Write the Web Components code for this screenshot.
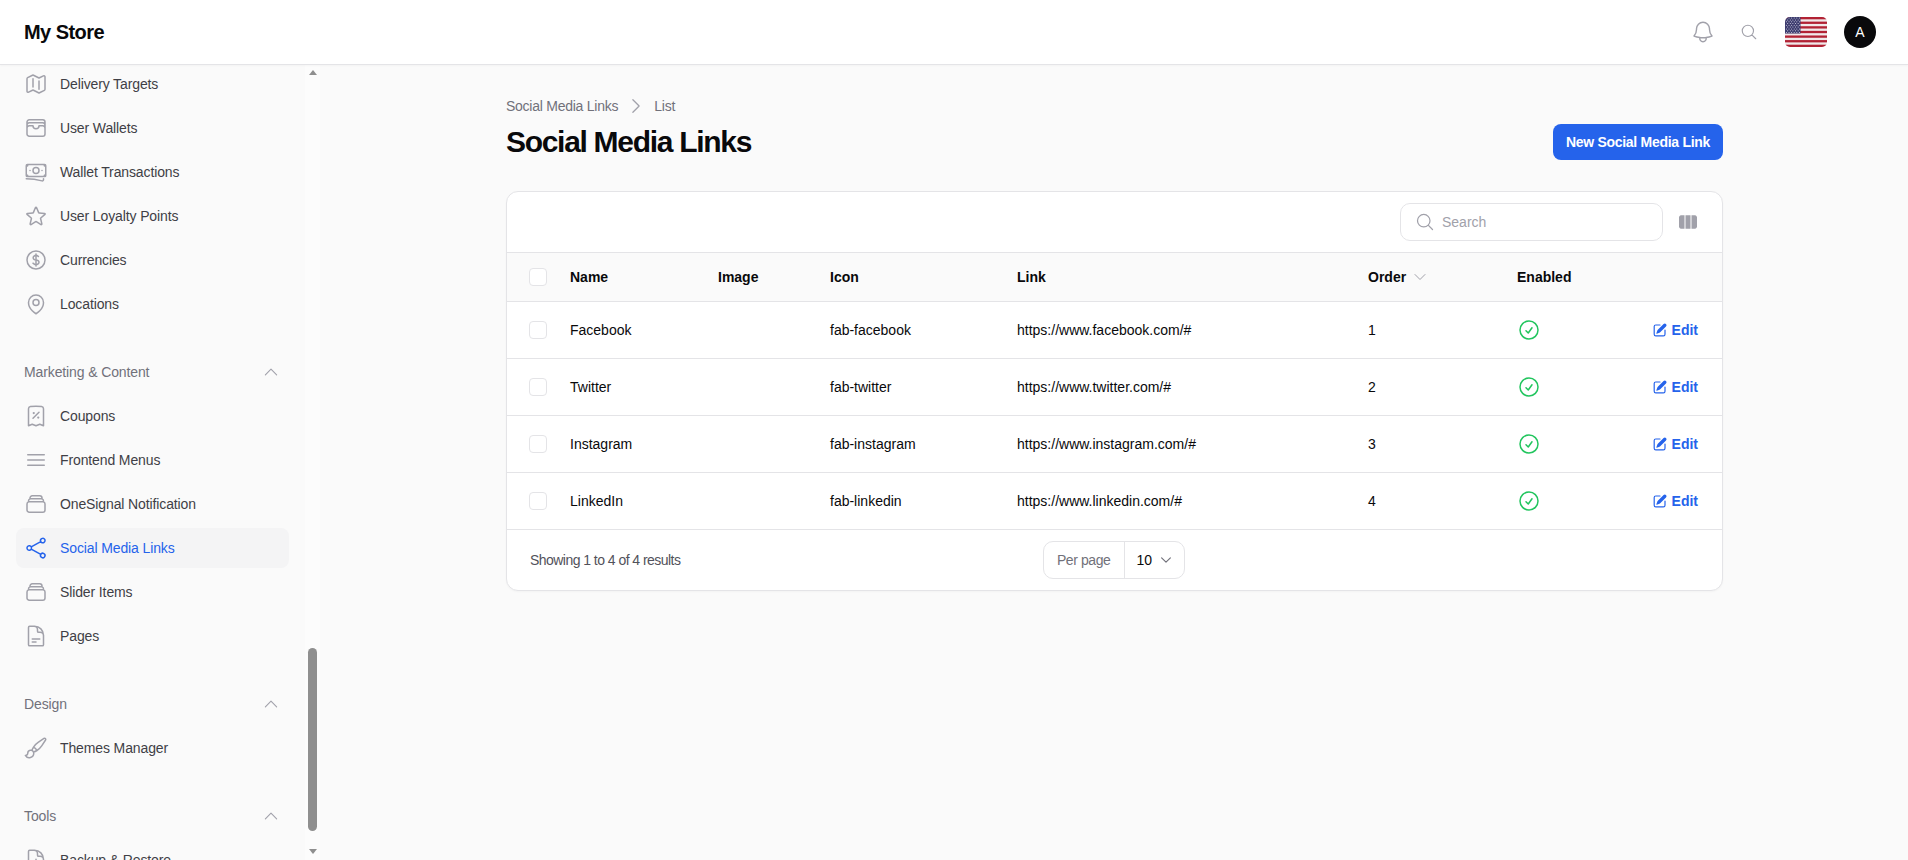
<!DOCTYPE html>
<html lang="en"><head><meta charset="utf-8"><title>Social Media Links</title>
<style>
html,body{margin:0;height:100%;overflow:hidden;background:#fafafa}
body{font-family:"Liberation Sans",Arial,sans-serif;font-size:14px;color:#09090b}
</style></head><body>
<app-shell>
  <top-bar slot="top" brand="My Store"></top-bar>
  <side-bar slot="side">
    <nav-item icon="map">Delivery Targets</nav-item>
    <nav-item icon="wallet">User Wallets</nav-item>
    <nav-item icon="banknotes">Wallet Transactions</nav-item>
    <nav-item icon="star">User Loyalty Points</nav-item>
    <nav-item icon="dollar">Currencies</nav-item>
    <nav-item icon="pin">Locations</nav-item>
    <nav-group label="Marketing &amp; Content">
      <nav-item icon="receipt">Coupons</nav-item>
      <nav-item icon="bars">Frontend Menus</nav-item>
      <nav-item icon="stack">OneSignal Notification</nav-item>
      <nav-item icon="share" active>Social Media Links</nav-item>
      <nav-item icon="stack">Slider Items</nav-item>
      <nav-item icon="doc">Pages</nav-item>
    </nav-group>
    <nav-group label="Design">
      <nav-item icon="brush">Themes Manager</nav-item>
    </nav-group>
    <nav-group label="Tools">
      <nav-item icon="docdown">Backup &amp; Restore</nav-item>
    </nav-group>
  </side-bar>
  <list-page slot="main" crumb="Social Media Links" leaf="List" heading="Social Media Links" action="New Social Media Link">
    <data-card>
      <table-row head>
        <check-box></check-box><span>Name</span><span>Image</span><span>Icon</span><span>Link</span><sort-head>Order</sort-head><span>Enabled</span><span></span>
      </table-row>
      <table-row><check-box></check-box><span>Facebook</span><span></span><span>fab-facebook</span><span>https://www.facebook.com/#</span><span>1</span><ok-mark></ok-mark><edit-link></edit-link></table-row>
      <table-row><check-box></check-box><span>Twitter</span><span></span><span>fab-twitter</span><span>https://www.twitter.com/#</span><span>2</span><ok-mark></ok-mark><edit-link></edit-link></table-row>
      <table-row><check-box></check-box><span>Instagram</span><span></span><span>fab-instagram</span><span>https://www.instagram.com/#</span><span>3</span><ok-mark></ok-mark><edit-link></edit-link></table-row>
      <table-row><check-box></check-box><span>LinkedIn</span><span></span><span>fab-linkedin</span><span>https://www.linkedin.com/#</span><span>4</span><ok-mark></ok-mark><edit-link></edit-link></table-row>
    </data-card>
  </list-page>
</app-shell>
<script>
const P={
map:'M9 6.75V15m6-6v8.25m.503 3.498 4.875-2.437c.381-.19.622-.58.622-1.006V4.82c0-.836-.88-1.38-1.628-1.006l-3.869 1.934c-.317.159-.69.159-1.006 0L9.503 3.252a1.125 1.125 0 0 0-1.006 0L3.622 5.689C3.24 5.88 3 6.27 3 6.695V19.18c0 .836.88 1.38 1.628 1.006l3.869-1.934c.317-.159.69-.159 1.006 0l4.994 2.497c.317.158.69.158 1.006 0Z',
wallet:'M21 12a2.25 2.25 0 0 0-2.25-2.25H15a3 3 0 1 1-6 0H5.25A2.25 2.25 0 0 0 3 12m18 0v6a2.25 2.25 0 0 1-2.25 2.25H5.25A2.25 2.25 0 0 1 3 18v-6m18 0V9M3 12V9m18 0a2.25 2.25 0 0 0-2.25-2.25H5.25A2.25 2.25 0 0 0 3 9m18 0V6a2.25 2.25 0 0 0-2.25-2.25H5.25A2.25 2.25 0 0 0 3 6v3',
banknotes:'M2.25 18.75a60.07 60.07 0 0 1 15.797 2.101c.727.198 1.453-.342 1.453-1.096V18.75M3.75 4.5v.75A.75.75 0 0 1 3 6h-.75m0 0v-.375c0-.621.504-1.125 1.125-1.125H20.25M2.25 6v9m18-10.5v.75c0 .414.336.75.75.75h.75m-1.5-1.5h.375c.621 0 1.125.504 1.125 1.125v9.75c0 .621-.504 1.125-1.125 1.125h-.375m1.5-1.5H21a.75.75 0 0 0-.75.75v.75m0 0H3.75m0 0h-.375a1.125 1.125 0 0 1-1.125-1.125V15m1.5 1.5v-.75A.75.75 0 0 0 3 15h-.75M15 10.5a3 3 0 1 1-6 0 3 3 0 0 1 6 0Zm3 0h.008v.008H18V10.5Zm-12 0h.008v.008H6V10.5Z',
star:'M11.48 3.499a.562.562 0 0 1 1.04 0l2.125 5.111a.563.563 0 0 0 .475.345l5.518.442c.499.04.701.663.321.988l-4.204 3.602a.563.563 0 0 0-.182.557l1.285 5.385a.562.562 0 0 1-.84.61l-4.725-2.885a.562.562 0 0 0-.586 0L6.982 20.54a.562.562 0 0 1-.84-.61l1.285-5.386a.562.562 0 0 0-.182-.557l-4.204-3.602a.562.562 0 0 1 .321-.988l5.518-.442a.563.563 0 0 0 .475-.345L11.48 3.5Z',
dollar:'M12 6v12m-3-2.818.879.659c1.171.879 3.07.879 4.242 0 1.172-.879 1.172-2.303 0-3.182C13.536 12.219 12.768 12 12 12c-.725 0-1.45-.22-2.003-.659-1.106-.879-1.106-2.303 0-3.182s2.9-.879 4.006 0l.415.33M21 12a9 9 0 1 1-18 0 9 9 0 0 1 18 0Z',
pin:'M15 10.5a3 3 0 1 1-6 0 3 3 0 0 1 6 0Z M19.5 10.5c0 7.142-7.5 11.25-7.5 11.25S4.5 17.642 4.5 10.5a7.5 7.5 0 1 1 15 0Z',
receipt:'m9 14.25 6-6m4.5-3.493V21.75l-3.75-1.5-3.75 1.5-3.75-1.5-3.75 1.5V4.757c0-1.108.806-2.057 1.907-2.185a48.507 48.507 0 0 1 11.186 0c1.1.128 1.907 1.077 1.907 2.185ZM9.75 9h.008v.008H9.75V9Zm.375 0a.375.375 0 1 1-.75 0 .375.375 0 0 1 .75 0Zm4.125 4.5h.008v.008h-.008V13.5Zm.375 0a.375.375 0 1 1-.75 0 .375.375 0 0 1 .75 0Z',
bars:'M3.75 6.75h16.5M3.75 12h16.5m-16.5 5.25h16.5',
stack:'M6 6.878V6a2.25 2.25 0 0 1 2.25-2.25h7.5A2.25 2.25 0 0 1 18 6v.878m-12 0c.235-.083.487-.128.75-.128h10.5c.263 0 .515.045.75.128m-12 0A2.25 2.25 0 0 0 4.5 9v.878m13.5-3A2.25 2.25 0 0 1 19.5 9v.878m0 0a2.246 2.246 0 0 0-.75-.128H5.25c-.263 0-.515.045-.75.128m15 0A2.25 2.25 0 0 1 21 12v6a2.25 2.25 0 0 1-2.25 2.25H5.25A2.25 2.25 0 0 1 3 18v-6c0-.98.626-1.813 1.5-2.122',
share:'M7.217 10.907a2.25 2.25 0 1 0 0 2.186m0-2.186c.18.324.283.696.283 1.093s-.103.77-.283 1.093m0-2.186 9.566-5.314m-9.566 7.5 9.566 5.314m0 0a2.25 2.25 0 1 0 3.935 2.186 2.25 2.25 0 0 0-3.935-2.186Zm0-12.814a2.25 2.25 0 1 0 3.933-2.185 2.25 2.25 0 0 0-3.933 2.185Z',
doc:'M19.5 14.25v-2.625a3.375 3.375 0 0 0-3.375-3.375h-1.5A1.125 1.125 0 0 1 13.5 7.125v-1.5a3.375 3.375 0 0 0-3.375-3.375H8.25m0 12.75h7.5m-7.5 3H12M10.5 2.25H5.625c-.621 0-1.125.504-1.125 1.125v17.25c0 .621.504 1.125 1.125 1.125h12.75c.621 0 1.125-.504 1.125-1.125V11.25a9 9 0 0 0-9-9Z',
docdown:'M19.5 14.25v-2.625a3.375 3.375 0 0 0-3.375-3.375h-1.5A1.125 1.125 0 0 1 13.5 7.125v-1.5a3.375 3.375 0 0 0-3.375-3.375H8.25m.75 12 3 3m0 0 3-3m-3 3v-6m-1.5-9H5.625c-.621 0-1.125.504-1.125 1.125v17.25c0 .621.504 1.125 1.125 1.125h12.75c.621 0 1.125-.504 1.125-1.125V11.25a9 9 0 0 0-9-9Z',
brush:'M9.53 16.122a3 3 0 0 0-5.78 1.128 2.25 2.25 0 0 1-2.4 2.245 4.5 4.5 0 0 0 8.4-2.245c0-.399-.078-.78-.22-1.128Zm0 0a15.998 15.998 0 0 0 3.388-1.62m-5.043-.025a15.994 15.994 0 0 1 1.622-3.395m3.42 3.42a15.995 15.995 0 0 0 4.764-4.648l3.876-5.814a1.151 1.151 0 0 0-1.597-1.597L14.146 6.32a15.996 15.996 0 0 0-4.649 4.763m3.42 3.42a6.776 6.776 0 0 0-3.42-3.42',
bell:'M14.857 17.082a23.848 23.848 0 0 0 5.454-1.31A8.967 8.967 0 0 1 18 9.75V9A6 6 0 0 0 6 9v.75a8.967 8.967 0 0 1-2.312 6.022c1.733.64 3.56 1.085 5.455 1.31m5.714 0a24.255 24.255 0 0 1-5.714 0m5.714 0a3 3 0 1 1-5.714 0',
search:'m21 21-5.197-5.197m0 0A7.5 7.5 0 1 0 5.196 5.196a7.5 7.5 0 0 0 10.607 10.607Z',
check:'M9 12.75 11.25 15 15 9.75M21 12a9 9 0 1 1-18 0 9 9 0 0 1 18 0Z',
up:'m4.5 15.75 7.5-7.5 7.5 7.5',
down:'m19.5 8.25-7.5 7.5-7.5-7.5',
right:'m8.25 4.5 7.5 7.5-7.5 7.5'};
const svg=(n,s,c,w=1.5)=>`<svg xmlns="http://www.w3.org/2000/svg" width="${s}" height="${s}" viewBox="0 0 24 24" fill="none" stroke="${c}" stroke-width="${w}" stroke-linecap="round" stroke-linejoin="round" style="display:block;flex:none"><path d="${P[n]}"/></svg>`;
const stripes=Array.from({length:7},(_,i)=>`<rect y="${i*2*30/13}" width="42" height="${30/13}" fill="#b22234"/>`).join('');
let stars='';for(let r=0;r<9;r++)for(let c=0;c<(r%2?5:6);c++)stars+=`<circle cx="${(r%2?2.7:1.4)+c*2.6}" cy="${1.1+r*1.8}" r=".5" fill="#e3e4f0"/>`;
class Base extends HTMLElement{
  html(h){this.attachShadow({mode:'open'}).innerHTML=h}
}
customElements.define('app-shell',class extends Base{constructor(){super();this.html(`<style>
:host{display:grid;grid-template-columns:320px 1fr;grid-template-rows:65px 795px;height:860px}
.t{grid-column:1/3;display:block}
</style><slot class="t" name="top"></slot><slot name="side"></slot><slot name="main"></slot>`)}});
customElements.define('top-bar',class extends Base{constructor(){super()}
connectedCallback(){if(this.shadowRoot)return;this.html(`<style>
:host{display:flex;align-items:center;height:64px;background:#fff;border-bottom:1px solid #e4e4e7;box-shadow:0 1px 2px rgba(0,0,0,.03);padding:0 32px 0 24px;position:relative;z-index:2}
b{font-size:20px;font-weight:700;letter-spacing:-.55px;color:#09090b;flex:1;line-height:28px}
.bell{margin-right:24px}.s{margin-right:27px}
.flag{width:42px;height:30px;border-radius:5px;overflow:hidden;margin-right:17px;display:block}
.av{width:32px;height:32px;border-radius:50%;background:#09090b;color:#fff;display:flex;align-items:center;justify-content:center;font-size:14px}
</style><b>${this.getAttribute('brand')}</b>
<span class="bell">${svg('bell',26,'#a1a1aa',1.3)}</span><span class="s">${svg('search',18,'#a1a1aa')}</span>
<svg class="flag" viewBox="0 0 42 30"><rect width="42" height="30" fill="#f1e9ea"/>${stripes}<rect width="15.500" height="16.500" fill="#3c3b6e"/>${stars}</svg>
<span class="av">A</span>`)}});
customElements.define('side-bar',class extends Base{constructor(){super();this.html(`<style>
:host{display:flex;height:795px;min-height:0;background:#fafafa}
.sc{width:305px;height:795px;overflow:hidden;box-sizing:border-box}
.sp{height:2479px}
.in{padding:0 16px 46px;display:flex;flex-direction:column;gap:4px;letter-spacing:-.12px}
.rail{width:15px;height:795px;background:#fcfcfc;display:flex;flex-direction:column;align-items:center;box-sizing:border-box;padding:5px 0 6px}
.ar{width:0;height:0;border-left:4.500px solid transparent;border-right:4.500px solid transparent}
.ar.u{border-bottom:5px solid #8f8f8f}.ar.d{border-top:5px solid #8f8f8f}
.gap{flex:1}
.th{width:9px;height:183px;border-radius:5px;background:#8f8f8f;margin-bottom:18px}
</style><div class="sc"><div class="sp"></div><div class="in"><slot></slot></div></div>
<div class="rail"><div class="ar u"></div><div class="gap"></div><div class="th"></div><div class="ar d"></div></div>`)}});
customElements.define('nav-item',class extends Base{constructor(){super()}
connectedCallback(){if(this.shadowRoot)return;const a=this.hasAttribute('active');this.html(`<style>
:host{display:flex;align-items:center;gap:12px;height:40px;padding:0 8px;border-radius:8px;font-size:14px;color:${a?'#2563eb':'#3f3f46'};${a?'background:#f4f4f5;':''}}
</style>${svg(this.getAttribute('icon'),24,a?'#2563eb':'#a1a1aa')}<slot></slot>`)}});
customElements.define('nav-group',class extends Base{constructor(){super()}
connectedCallback(){if(this.shadowRoot)return;this.html(`<style>
:host{display:flex;flex-direction:column;gap:4px;margin-top:24px}
.l{display:flex;align-items:center;justify-content:space-between;height:40px;padding:0 9px 0 8px;font-size:14px;color:#71717a}
</style><div class="l"><span>${this.getAttribute('label')}</span>${svg('up',18,'#a1a1aa')}</div><slot></slot>`)}});
customElements.define('list-page',class extends Base{constructor(){super()}
connectedCallback(){if(this.shadowRoot)return;const g=k=>this.getAttribute(k);this.html(`<style>
:host{display:block;padding:31px 185px 0 186px;min-width:0}
.c{display:flex;align-items:center;gap:8px;color:#71717a;font-size:14px;height:20px;letter-spacing:-.25px}
.h{display:flex;justify-content:space-between;align-items:center;margin-bottom:31px}
h1{margin:0;font-size:30px;line-height:36px;font-weight:700;letter-spacing:-1.3px;color:#09090b;margin-top:8px}
.b{display:flex;align-items:center;height:36px;padding:0 13px;background:#2563eb;color:#fff;border-radius:8px;font-size:14px;font-weight:700;letter-spacing:-.29px;margin-top:8px}
</style><div class="c"><span>${g('crumb')}</span>${svg('right',20,'#a1a1aa')}<span>${g('leaf')}</span></div>
<div class="h"><h1>${g('heading')}</h1><span class="b">${g('action')}</span></div><slot></slot>`)}});
customElements.define('data-card',class extends Base{constructor(){super();this.html(`<style>
:host{display:block;background:#fff;border:1px solid #e4e4e7;border-radius:12px;overflow:hidden;box-shadow:0 1px 2px rgba(0,0,0,.03)}
.tb{display:flex;justify-content:flex-end;align-items:center;height:60px;padding:0 24px 0 0;gap:15px}
.s{display:flex;align-items:center;gap:7px;width:263px;height:38px;box-sizing:border-box;padding:0 14px;border:1px solid #e4e4e7;border-radius:10px;color:#a1a1aa;font-size:14px}
.ft{display:grid;grid-template-columns:1fr auto 1fr;align-items:center;height:60px;box-sizing:content-box;padding:0 24px 0 23px;border-top:1px solid #e4e4e7;color:#52525b;font-size:14px}
.ft>span{letter-spacing:-.54px}
.pp{display:flex;align-items:center;height:38px;box-sizing:border-box;border:1px solid #e4e4e7;border-radius:10px;color:#71717a}
.pp>span{padding:0 13px;letter-spacing:-.4px}
.n{display:flex;align-items:center;gap:7px;border-left:1px solid #e4e4e7;height:100%;padding:0 11px 0 12px;color:#09090b}
</style><div class="tb"><div class="s">${svg('search',20,'#a1a1aa')}<span>Search</span></div>
<svg width="20" height="20" viewBox="0 0 20 20" fill="#a1a1aa" style="display:block"><path d="M1 5.500C1 4.400 1.900 3.200 3 3.200H6.500V16.800H3C1.900 16.800 1 15.600 1 14.500ZM7.500 3.200H12.500V16.800H7.500ZM13.500 3.200H17C18.100 3.200 19 4.400 19 5.500V14.500C19 15.600 18.100 16.800 17 16.800H13.500Z"/></svg></div>
<slot></slot>
<div class="ft"><span>Showing 1 to 4 of 4 results</span><div class="pp"><span>Per page</span><div class="n">10 ${svg('down',14,'#71717a',2)}</div></div></div>`)}});
customElements.define('table-row',class extends Base{constructor(){super()}
connectedCallback(){if(this.shadowRoot)return;const h=this.hasAttribute('head');this.html(`<style>
:host{display:grid;grid-template-columns:40px 148px 112px 187px 351px 149px 90px 1fr;align-items:center;box-sizing:border-box;height:${h?'49px':'57px'};border-top:1px solid #e4e4e7;padding:0 24px 0 23px;font-size:14px;color:#09090b;${h?'background:#fafafa;font-weight:700;':''}}
</style><slot></slot>`)}});
customElements.define('check-box',class extends Base{constructor(){super();this.html(`<style>
:host{display:block;width:18px;height:18px;margin-left:-1px;box-sizing:border-box;border:1px solid #e4e4e7;border-radius:4px;background:#fff}
</style>`)}});
customElements.define('sort-head',class extends Base{constructor(){super();this.html(`<style>
:host{display:flex;align-items:center;gap:6px}
</style><slot></slot>${svg('down',16,'#a1a1aa')}`)}});
customElements.define('ok-mark',class extends Base{constructor(){super();this.html(`<style>
:host{display:block;width:24px;height:24px}
</style>${svg('check',24,'#22c55e')}`)}});
customElements.define('edit-link',class extends Base{constructor(){super();this.html(`<style>
:host{display:flex;justify-content:flex-end;align-items:center;gap:4px;color:#2563eb;font-weight:700;font-size:14px}
</style><svg width="16" height="16" viewBox="0 0 20 20" fill="#2563eb" style="display:block"><path d="M5.433 13.917l1.262-3.155A4 4 0 017.58 9.42l6.92-6.918a2.121 2.121 0 013 3l-6.92 6.918c-.383.383-.84.685-1.343.886l-3.154 1.262a.5.5 0 01-.65-.65z"/><path d="M3.500 5.750c0-.69.56-1.250 1.250-1.250H10A.75.75 0 0010 3H4.750A2.750 2.750 0 002 5.750v9.500A2.750 2.750 0 004.750 18h9.500A2.750 2.750 0 0017 15.250V10a.75.75 0 00-1.500 0v5.250c0 .69-.56 1.250-1.250 1.250h-9.500c-.69 0-1.250-.56-1.250-1.250v-9.500z"/></svg><span>Edit</span>`)}});
document.querySelector('side-bar').shadowRoot.querySelector('.sc').scrollTop=2480;
</script>
</body></html>
